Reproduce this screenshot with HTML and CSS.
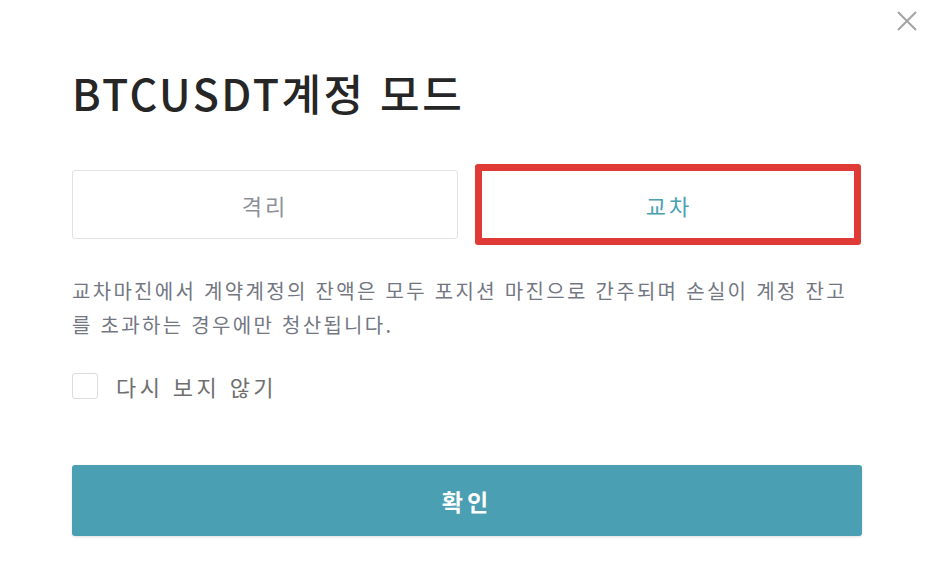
FILE: index.html
```html
<!doctype html>
<html lang="ko">
<head>
    <meta charset="UTF-8">
    <meta name="viewport" content="width=device-width, initial-scale=1.0">
    <title>계정 모드</title>
    <link rel="stylesheet" href="styles.css">
</head>
<body>
    <div class="modal">
        <a class="close" href="javascript:void(0)">
            <svg width="22" height="22" viewBox="0 0 22 22">
                <path d="M2 2L20 20M20 2L2 20" stroke="#a3a3a3" stroke-width="2" fill="none"/>
            </svg>
        </a>
        <h1 class="title">BTCUSDT계정 모드</h1>
        <div class="tabs">
            <a class="tab" href="javascript:void(0)">격리</a>
            <a class="tab on" href="javascript:void(0)">교차</a>
        </div>
        <p class="desc">교차마진에서 계약계정의 잔액은 모두 포지션 마진으로 간주되며 손실이 계정 잔고를 초과하는 경우에만 청산됩니다.</p>
        <label class="check">
            <span class="box"></span>
            <span class="label">다시 보지 않기</span>
        </label>
        <a class="confirm" href="javascript:void(0)">확인</a>
    </div>
</body>
</html>
```
FILE: styles.css
```css
*{
    padding: 0;
    margin: 0;
    box-sizing: border-box;
}
a{
    text-decoration: none;
}
body{
    background: #fff;
    font-family: "Noto Sans CJK KR", "Noto Sans", sans-serif;
}
.modal{
    position: relative;
    width: 930px;
    height: 562px;
    padding: 62px 68px 0 72px;
}
.close{
    position: absolute;
    right: 12px;
    top: 10px;
    display: block;
    width: 22px;
    height: 22px;
}
.close svg{
    display: block;
}
.title{
    font-size: 43px;
    line-height: 60px;
    font-weight: 500;
    letter-spacing: 2.5px;
    color: #262626;
}
.tabs{
    display: grid;
    grid-template-columns: 1fr 1fr;
    gap: 18px;
    margin-top: 48px;
}
.tab{
    position: relative;
    display: flex;
    align-items: center;
    justify-content: center;
    height: 69px;
    border: 1px solid #e1e2e8;
    border-radius: 3px;
    font-size: 22px;
    letter-spacing: 3px;
    color: #8d9099;
}
.tab.on{
    border-color: transparent;
    color: #4aa1b3;
}
.tab.on::after{
    content: "";
    position: absolute;
    left: -2px;
    right: 0;
    top: -7px;
    bottom: -7px;
    border: 7px solid #df3a35;
    border-radius: 3px;
}
.desc{
    margin-top: 35px;
    font-size: 20px;
    line-height: 34px;
    letter-spacing: 2.3px;
    color: #737782;
}
.check{
    display: flex;
    align-items: center;
    gap: 18px;
    margin-top: 31px;
    height: 26px;
}
.check .box{
    width: 26px;
    height: 26px;
    border: 1px solid #dcdcdc;
    border-radius: 3px;
}
.check .label{
    font-size: 22px;
    letter-spacing: 3.4px;
    color: #6f6f6f;
}
.confirm{
    display: flex;
    align-items: center;
    justify-content: center;
    margin-top: 66px;
    height: 71px;
    background: #4aa0b2;
    border-radius: 3px;
    box-shadow: 0 1px 3px rgba(0,0,0,0.12);
    color: #fff;
    font-size: 23px;
    font-weight: 700;
    letter-spacing: 4px;
}
```
